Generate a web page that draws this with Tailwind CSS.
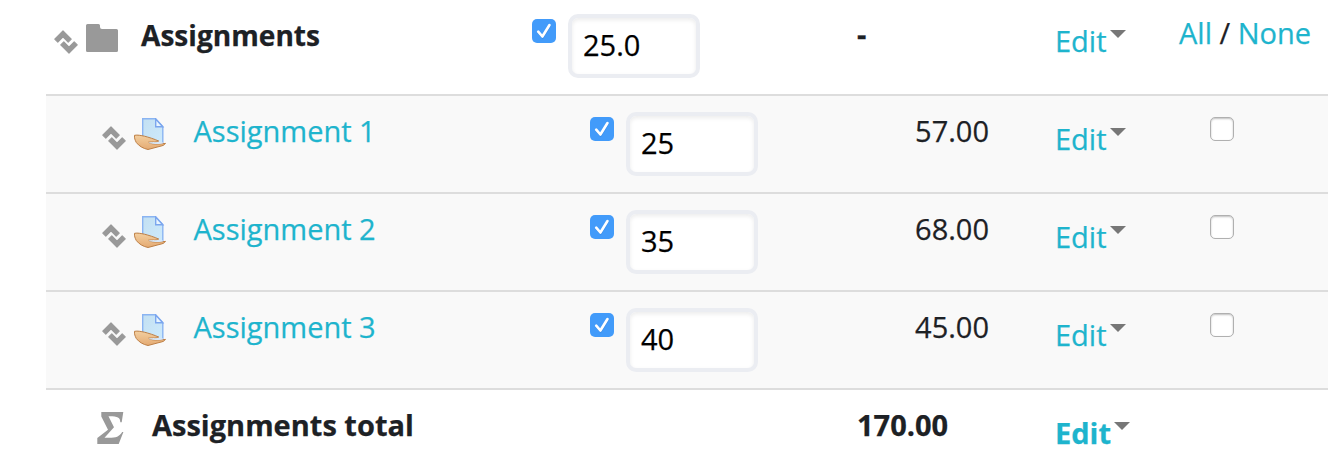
<!DOCTYPE html>
<html lang="en">
<head>
<meta charset="utf-8">
<title>Gradebook setup</title>
<script src="https://cdn.jsdelivr.net/npm/@tailwindcss/browser@4"></script>
</head>
<body class="h-[464px] overflow-hidden bg-white font-['Open_Sans',sans-serif] text-[29px] leading-[40px] text-[#1d2125] [-webkit-text-stroke:0.25px]">
<svg class="absolute h-0 w-0">
  <defs>
    <linearGradient id="paper" x1="0" y1="0" x2="1" y2="1"><stop offset="0" stop-color="#c3e0f2"/><stop offset="1" stop-color="#cdeafc"/></linearGradient>
    <linearGradient id="skin" x1="0" y1="0" x2="0" y2="1"><stop offset="0" stop-color="#f3cfa0"/><stop offset="1" stop-color="#e4aa72"/></linearGradient>
  </defs>
  <symbol id="move" viewBox="0 0 24 24"><path fill="#999" stroke="#999" stroke-width="1.200" stroke-linejoin="round" d="M9 .9 17.200 9.100 14.200 12.100 9 6.900 3.800 12.100.8 9.100zM15 23.100 6.800 14.900 9.800 11.900 15 17.100 20.200 11.900 23.200 14.900z"/></symbol>
  <symbol id="folder" viewBox="0 0 32 28"><path fill="#999" d="M1.500 0h11Q14 0 14 1.500V3q0 2 2 2h14.500Q32 5 32 6.500v20q0 1.500-1.500 1.500h-29Q0 28 0 26.500v-25Q0 0 1.500 0z"/></symbol>
  <symbol id="assign" viewBox="0 0 32 32">
    <path d="M8.700.7h12.800l7.300 7.800v18H8.700z" fill="url(#paper)" stroke="#8ab4f2" stroke-width="1.400"/>
    <path d="M21.700 1v7.700h7z" fill="#e9f6ff" stroke="#7ba6ee" stroke-width="1.400"/>
    <path d="M.5 17.300C3.500 16.700 7 17.500 10.500 18.200c4 1 9.500 2.700 14.500 5-2 1.500-7 .5-10.300 1 1.300 2.300 10 2 16.800 1.200-1 1.700-3 2.400-5.500 2.900L14 31.500C9 30.500 5 28 2.300 24.500 1 22 .2 20 .5 17.300z" fill="url(#skin)" stroke="#bd7f46" stroke-width="1"/>
    <path d="M14.500 24.600c3-.8 7 .2 10.500-1.200l3.800.8v1.200c-5 .8-12.500 1-14.300-.8z" fill="#d8e6f5"/>
  </symbol>
  <symbol id="sigma" viewBox="0 0 27 32"><path fill="#999" d="M4.300 0H26.300L24.700 10.300h-1.400C23.300 5.500 20.500 4.200 11.500 4.300L17 15.300 7.500 25.700c10 .5 14.500-.2 17.700-5.700h1.200L21.700 32H.3v-6L11 17.700 4.300 4.500z"/></symbol>
  <symbol id="tick" viewBox="0 0 24 24"><path d="M6.500 13.700l4.200 4.500L17.800 6.500" fill="none" stroke="#2a70c0" stroke-opacity=".35" stroke-width="2.600" stroke-linecap="round"/><path d="M6.200 12.700l4.200 4.800L17.500 6" fill="none" stroke="#fff" stroke-width="2.600" stroke-linecap="round" stroke-linejoin="round"/></symbol>
  <symbol id="caret" viewBox="0 0 16 8"><path d="M0 0h16L8 8z" fill="#777"/></symbol>
</svg>

<main class="ml-[46px] w-[1282px]">
  <div class="grid h-24 grid-cols-[486px_308px_215px_1fr_160px] border-b-2 border-[#ddd]">
    <div class="flex items-start pl-2">
      <svg class="mt-[30px] h-6 w-6"><use href="#move"/></svg>
      <svg class="ml-2 mt-6 h-7 w-8"><use href="#folder"/></svg>
      <span class="ml-[23px] mt-[15px] text-[28.1px] font-bold">Assignments</span>
    </div>
    <div class="flex items-start">
      <span class="mt-[19px] h-6 w-6 rounded-[5px] bg-[#429bfa]"><svg class="h-6 w-6"><use href="#tick"/></svg></span>
      <span class="ml-3 mt-3.5 h-16 w-[132px] rounded-[10px] border-4 border-[#ebedf2] bg-white pl-[11px] pt-[7px] text-black shadow-[inset_0_2px_4px_rgba(0,0,0,0.08)]">25.0</span>
    </div>
    <div class="pl-[17px] pt-3.5 font-bold">-</div>
    <div class="flex items-start"><span class="mt-[21px] text-[#1eb4cd]">Edit</span><svg class="ml-[3px] mt-[30px] h-2 w-4"><use href="#caret"/></svg></div>
    <div class="ml-[11px] whitespace-nowrap pt-[13px]"><span class="text-[#1eb4cd]">All</span> / <span class="text-[#1eb4cd]">None</span></div>
  </div>

  <div class="grid h-[98px] grid-cols-[486px_308px_215px_1fr_160px] border-b-2 border-[#ddd] bg-[#f9f9f9]">
    <div class="flex items-start pl-14">
      <svg class="mt-[30px] h-6 w-6"><use href="#move"/></svg>
      <svg class="ml-2 mt-[22px] h-8 w-8"><use href="#assign"/></svg>
      <span class="ml-[27.500px] mt-[15px] text-[#1eb4cd]">Assignment 1</span>
    </div>
    <div class="flex items-start pl-[58px]">
      <span class="mt-[21px] h-6 w-6 rounded-[5px] bg-[#429bfa]"><svg class="h-6 w-6"><use href="#tick"/></svg></span>
      <span class="ml-3 mt-4 h-16 w-[132px] rounded-[10px] border-4 border-[#ebedf2] bg-white pl-[11px] pt-[7px] text-black shadow-[inset_0_2px_4px_rgba(0,0,0,0.08)]">25</span>
    </div>
    <div class="pr-[66px] pt-[15px] text-right">57.00</div>
    <div class="flex items-start"><span class="mt-[23px] text-[#1eb4cd]">Edit</span><svg class="ml-[3px] mt-8 h-2 w-4"><use href="#caret"/></svg></div>
    <div class="pl-[42px] pt-[21px]"><div class="h-6 w-6 rounded-[5px] border border-[#b0b0b0] bg-white shadow-[inset_0_1px_2px_rgba(0,0,0,0.25)]"></div></div>
  </div>

  <div class="grid h-[98px] grid-cols-[486px_308px_215px_1fr_160px] border-b-2 border-[#ddd] bg-[#f9f9f9]">
    <div class="flex items-start pl-14">
      <svg class="mt-[30px] h-6 w-6"><use href="#move"/></svg>
      <svg class="ml-2 mt-[22px] h-8 w-8"><use href="#assign"/></svg>
      <span class="ml-[27.500px] mt-[15px] text-[#1eb4cd]">Assignment 2</span>
    </div>
    <div class="flex items-start pl-[58px]">
      <span class="mt-[21px] h-6 w-6 rounded-[5px] bg-[#429bfa]"><svg class="h-6 w-6"><use href="#tick"/></svg></span>
      <span class="ml-3 mt-4 h-16 w-[132px] rounded-[10px] border-4 border-[#ebedf2] bg-white pl-[11px] pt-[7px] text-black shadow-[inset_0_2px_4px_rgba(0,0,0,0.08)]">35</span>
    </div>
    <div class="pr-[66px] pt-[15px] text-right">68.00</div>
    <div class="flex items-start"><span class="mt-[23px] text-[#1eb4cd]">Edit</span><svg class="ml-[3px] mt-8 h-2 w-4"><use href="#caret"/></svg></div>
    <div class="pl-[42px] pt-[21px]"><div class="h-6 w-6 rounded-[5px] border border-[#b0b0b0] bg-white shadow-[inset_0_1px_2px_rgba(0,0,0,0.25)]"></div></div>
  </div>

  <div class="grid h-[98px] grid-cols-[486px_308px_215px_1fr_160px] border-b-2 border-[#ddd] bg-[#f9f9f9]">
    <div class="flex items-start pl-14">
      <svg class="mt-[30px] h-6 w-6"><use href="#move"/></svg>
      <svg class="ml-2 mt-[22px] h-8 w-8"><use href="#assign"/></svg>
      <span class="ml-[27.500px] mt-[15px] text-[#1eb4cd]">Assignment 3</span>
    </div>
    <div class="flex items-start pl-[58px]">
      <span class="mt-[21px] h-6 w-6 rounded-[5px] bg-[#429bfa]"><svg class="h-6 w-6"><use href="#tick"/></svg></span>
      <span class="ml-3 mt-4 h-16 w-[132px] rounded-[10px] border-4 border-[#ebedf2] bg-white pl-[11px] pt-[7px] text-black shadow-[inset_0_2px_4px_rgba(0,0,0,0.08)]">40</span>
    </div>
    <div class="pr-[66px] pt-[15px] text-right">45.00</div>
    <div class="flex items-start"><span class="mt-[23px] text-[#1eb4cd]">Edit</span><svg class="ml-[3px] mt-8 h-2 w-4"><use href="#caret"/></svg></div>
    <div class="pl-[42px] pt-[21px]"><div class="h-6 w-6 rounded-[5px] border border-[#b0b0b0] bg-white shadow-[inset_0_1px_2px_rgba(0,0,0,0.25)]"></div></div>
  </div>

  <div class="grid h-[74px] grid-cols-[486px_308px_215px_1fr_160px] font-bold">
    <div class="flex items-start pl-[51px]">
      <svg class="mt-[22px] h-8 w-[27px]"><use href="#sigma"/></svg>
      <span class="ml-7 mt-[15px]">Assignments total</span>
    </div>
    <div></div>
    <div class="pl-[17px] pt-[15px]">170.00</div>
    <div class="flex items-start"><span class="mt-[23px] text-[#1eb4cd]">Edit</span><svg class="ml-[3px] mt-8 h-2 w-4"><use href="#caret"/></svg></div>
    <div></div>
  </div>
</main>
</body>
</html>
